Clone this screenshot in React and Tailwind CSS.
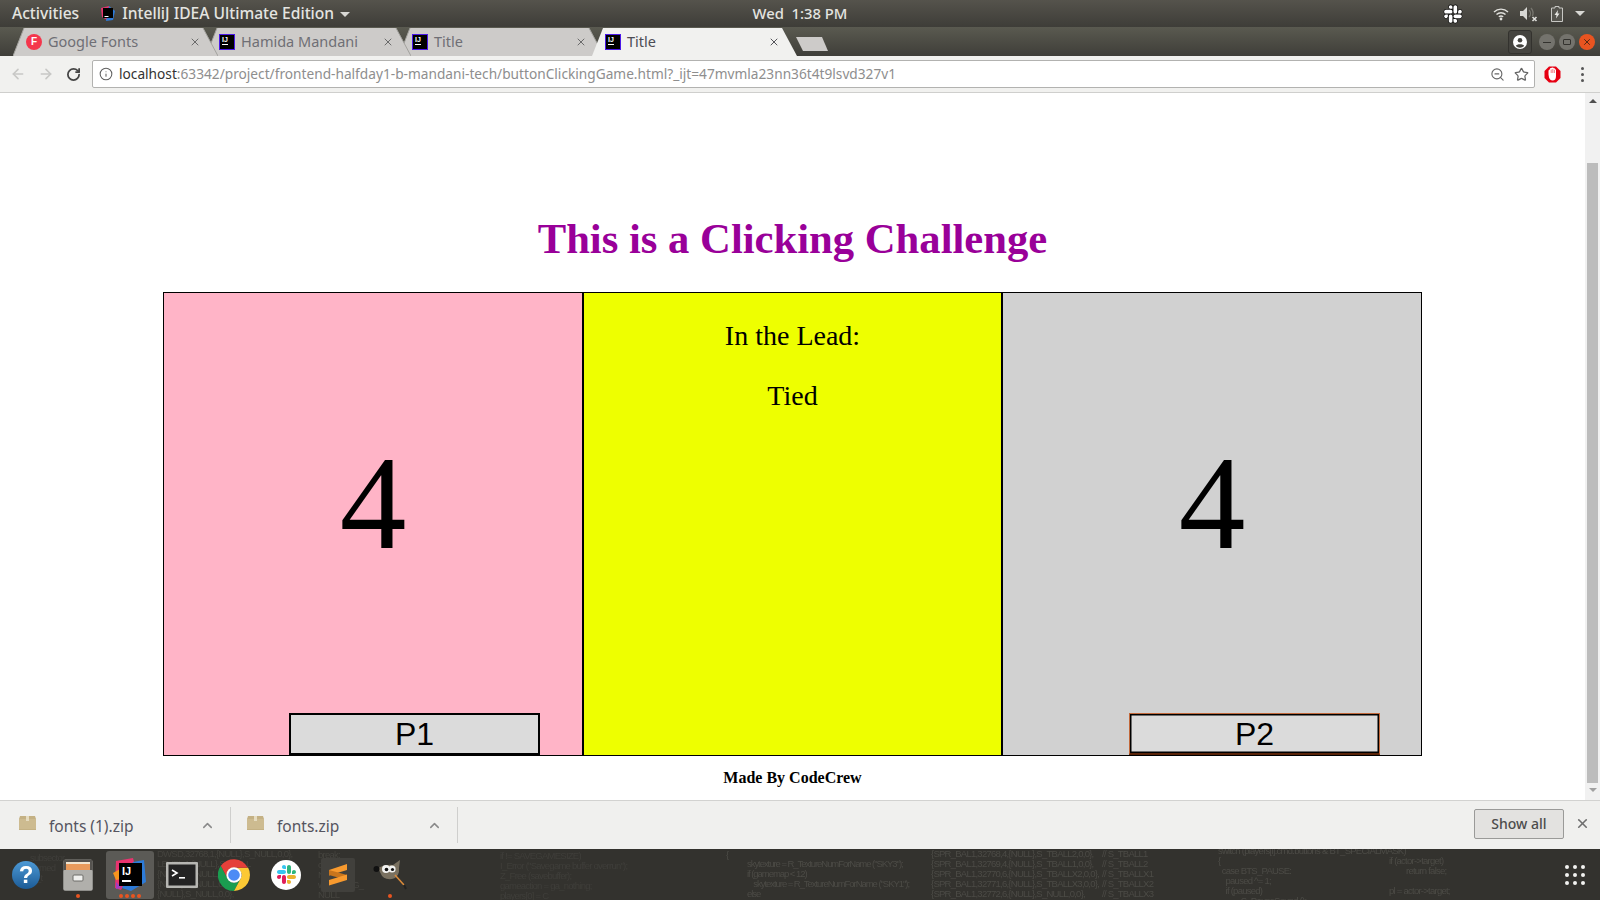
import { ArrowLeft, ArrowRight, RotateCw, Info, ZoomOut, Star, ChevronUp, X } from "lucide-react";

function IjFavicon() {
  return (
    <div className="flex h-4 w-4 shrink-0 flex-col border border-[#4a18e8] bg-black pl-[2px] text-white">
      <span className="font-['Liberation_Sans',sans-serif] text-[7px] leading-[9px] font-bold">IJ</span>
      <span className="h-px w-[6px] bg-white" />
    </div>
  );
}

function TabShape({ active }) {
  return (
    <svg className="absolute inset-0" width="205" height="29" viewBox="0 0 205 29">
      <path d="M0 29 L11 1 H190 L205 29 Z" fill={active ? "#f1f1ef" : "#cdcbc9"} />
      {!active && <path d="M0 29 L11 1 M190 1 L205 29" stroke="#a3a29e" fill="none" />}
    </svg>
  );
}

function Tab({ title, icon, active, className }) {
  return (
    <div className={`relative h-[29px] w-[205px] shrink-0 ${className}`}>
      <TabShape active={active} />
      <div className="relative flex h-full items-center pr-[15px] pl-[13px]">
        {icon}
        <span className={`ml-[6px] text-[14.5px] ${active ? "text-[#4c4c54]" : "text-[#6f6f75]"}`}>{title}</span>
        <X className={`mr-[2px] ml-auto ${active ? "text-[#55555a]" : "text-[#6a6a6a]"}`} size={12} strokeWidth={2} />
      </div>
    </div>
  );
}

function TopBar() {
  return (
    <div className="grid h-[27px] grid-cols-[1fr_auto_1fr] items-center bg-gradient-to-b from-[#55534c] to-[#3e3d38] font-medium text-[#e4e4e0]">
      <div className="flex items-center pl-3 text-[15.6px]">
        <span>Activities</span>
        <svg className="ml-[21px]" width="16" height="17" viewBox="0 0 16 17">
          <path d="M1 3 L9 1 L7 15 L2 12Z" fill="#e8336f" />
          <path d="M9 1 L15 6 L13 15 L6 16Z" fill="#2d7bd8" />
          <rect x="3" y="3" width="10" height="10" fill="#000" />
          <rect x="4.5" y="11" width="4" height="1" fill="#fff" />
        </svg>
        <span className="ml-[6px]">IntelliJ IDEA Ultimate Edition</span>
        <span className="mt-[2px] ml-[6px] h-0 w-0 border-x-[5px] border-t-[5px] border-x-transparent border-t-[#d8d8d4]" />
      </div>
      <div className="-mt-[1px] text-[14.8px]">Wed&nbsp;&nbsp;1:38 PM</div>
      <div className="flex items-center justify-end">
        <svg width="20" height="20" viewBox="-8 -8 139 139">
          <SlackPaths mono />
        </svg>
        <svg className="ml-[30px]" width="16" height="14" viewBox="0 0 16 14" fill="none" stroke="#e0e0dc" strokeWidth="1.4">
          <path d="M1 5 A10 10 0 0 1 15 5" />
          <path d="M3.5 7.5 A6.5 6.5 0 0 1 12.5 7.5" />
          <path d="M5.8 9.8 A3.5 3.5 0 0 1 10.2 9.8" />
          <circle cx="8" cy="12" r="1.4" fill="#e0e0dc" stroke="none" />
        </svg>
        <svg className="ml-[11px]" width="18" height="16" viewBox="0 0 18 16" fill="none">
          <path d="M0 5 H3 L7 1 V14 L3 10 H0Z" fill="#d8d8d4" />
          <path d="M9 4 A5 5 0 0 1 9 11 M11 2 A8 8 0 0 1 12.5 10" stroke="#77766f" strokeWidth="1.3" />
          <path d="M12.5 11 L16.5 15 M16.5 11 L12.5 15" stroke="#e0e0dc" strokeWidth="1.6" />
        </svg>
        <svg className="ml-[13px]" width="12" height="16" viewBox="0 0 12 16">
          <path d="M4 0.5 H8 V2 H11.5 V15.5 H0.5 V2 H4Z" fill="#55544e" stroke="#c8c8c4" />
          <path d="M7 4 L3.5 9 H5.5 L5 12.5 L8.5 7.5 H6.5Z" fill="#e8e8e4" />
        </svg>
        <span className="mr-[15px] ml-[12px] h-0 w-0 border-x-[5px] border-t-[5px] border-x-transparent border-t-[#d8d8d4]" />
      </div>
    </div>
  );
}

function TabBar() {
  return (
    <div className="flex h-[29px] bg-gradient-to-b from-[#5a5a50] to-[#3f3e39] pl-[13px]">
      <Tab
        className="z-30"
        title="Google Fonts"
        icon={
          <span className="flex h-4 w-4 shrink-0 items-center justify-center rounded-full bg-[#f4364c] font-['Liberation_Sans',sans-serif] text-[10px] font-bold text-white">
            F
          </span>
        }
      />
      <Tab className="z-20 -ml-[12px]" title="Hamida Mandani" icon={<IjFavicon />} />
      <Tab className="z-10 -ml-[12px]" title="Title" icon={<IjFavicon />} />
      <Tab className="z-40 -ml-[12px]" title="Title" icon={<IjFavicon />} active />
      <svg className="mt-[9px] -ml-[1px]" width="33" height="16" viewBox="0 0 33 16">
        <path d="M0 1 H26 L32 15 H7Z" fill="#cdcbc9" />
      </svg>
      <div className="ml-auto flex items-start">
        <div className="mt-[3px] flex h-6 w-6 items-center justify-center rounded-[3px] border border-[#33322e] bg-[#45443f]">
          <svg width="14" height="14" viewBox="0 0 14 14">
            <circle cx="7" cy="7" r="7" fill="#fff" />
            <circle cx="7" cy="5.3" r="2.3" fill="#45443f" />
            <path d="M2.8 11 C3.5 8.8 10.5 8.8 11.2 11 A6 6 0 0 1 2.8 11Z" fill="#45443f" />
          </svg>
        </div>
        <div className="mt-[7px] ml-[7px] flex h-4 w-4 items-center justify-center rounded-full bg-[#74736d]">
          <span className="h-px w-2 bg-[#33322e]" />
        </div>
        <div className="mt-[7px] ml-[4px] flex h-4 w-4 items-center justify-center rounded-full bg-[#74736d]">
          <span className="h-[6px] w-2 rounded-[1px] border border-[#33322e]" />
        </div>
        <div className="mt-[7px] mr-[5px] ml-[4px] flex h-4 w-4 items-center justify-center rounded-full bg-[#e95420] text-[#3a2010]">
          <X size={10} strokeWidth={2} />
        </div>
      </div>
    </div>
  );
}

function AddressBar() {
  return (
    <div className="flex h-[37px] items-center border-b border-[#cfcfcd] bg-[#f1f1ef]">
      <ArrowLeft className="ml-[10px] text-[#c8c8c6]" size={16} strokeWidth={2.4} />
      <ArrowRight className="ml-[12px] text-[#c8c8c6]" size={16} strokeWidth={2.4} />
      <RotateCw className="ml-[12px] text-[#444]" size={15} strokeWidth={2.8} />
      <div className="ml-[11px] flex h-[28px] w-[1443px] items-center rounded-[2px] border border-[#b2b2b0] bg-white">
        <Info className="ml-[6px] text-[#5f5f5f]" size={14} strokeWidth={1.8} />
        <span className="ml-[6px] whitespace-nowrap text-[13.7px] text-[#8e8e8e]">
          <span className="text-[#333]">localhost</span>:63342/project/frontend-halfday1-b-mandani-tech/buttonClickingGame.html?_ijt=47mvmla23nn36t4t9lsvd327v1
        </span>
        <ZoomOut className="mr-[9px] ml-auto text-[#666]" size={15} strokeWidth={1.8} />
        <Star className="mr-[5px] text-[#666]" size={15} strokeWidth={2} />
      </div>
      <svg className="ml-[9px]" width="17" height="17" viewBox="0 0 17 17">
        <path d="M5 0.5 H12 L16.5 5 V12 L12 16.5 H5 L0.5 12 V5Z" fill="#e60012" />
        <path d="M4.5 8.5 V5 Q4.5 3.5 5.8 3.5 V3 Q6 2 7 2 Q7.5 1.6 8.5 1.6 Q9.5 1.6 10 2.4 Q11 2.2 11.4 3.2 L12 4 V10 Q12 14.5 8.5 14.5 Q6 14.5 5 11.5Z" fill="#fff" />
        <path d="M7.2 3.5 V7 M8.8 3 V7 M10.4 3.8 V7" stroke="#e60012" strokeWidth="0.5" />
      </svg>
      <div className="ml-[20px] flex flex-col gap-[3px]">
        <span className="h-[3px] w-[3px] rounded-full bg-[#555]" />
        <span className="h-[3px] w-[3px] rounded-full bg-[#555]" />
        <span className="h-[3px] w-[3px] rounded-full bg-[#555]" />
      </div>
    </div>
  );
}

function Game() {
  return (
    <div className="flex min-w-0 flex-1 flex-col items-center font-['Liberation_Serif',serif] text-black">
      <h1 className="mt-[117px] text-[42.67px] leading-[58px] font-bold text-[#990099]">This is a Clicking Challenge</h1>
      <div className="mt-[24px] flex h-[464px] w-[1259px] border border-black">
        <div className="flex w-[420px] flex-col border-r-2 border-black bg-[#ffb4c7]">
          <div className="mt-[137px] text-center text-[133.33px] leading-[147px]">4</div>
          <button className="mt-auto ml-[125px] h-[42px] w-[251px] border-2 border-black bg-[#dbdbdb] font-['Liberation_Sans',sans-serif] text-[32px] leading-none">
            P1
          </button>
        </div>
        <div className="flex w-[419px] flex-col items-center border-r-2 border-black bg-[#eeff00] text-[28px] leading-[32px]">
          <p className="mt-[27px]">In the Lead:</p>
          <p className="mt-[28px]">Tied</p>
        </div>
        <div className="flex w-[418px] flex-col bg-[#d1d1d1]">
          <div className="mt-[137px] text-center text-[133.33px] leading-[147px]">4</div>
          <button className="mt-auto ml-[126px] h-[42px] w-[251px] border border-b-2 border-[#c2683a] border-b-[#5a2408] bg-[#dbdbdb] font-['Liberation_Sans',sans-serif] text-[32px] leading-none shadow-[inset_0_0_0_1.5px_#000]">
            P2
          </button>
        </div>
      </div>
      <p className="mt-[13px] text-[16px] leading-[18px] font-bold">Made By CodeCrew</p>
    </div>
  );
}

function Scrollbar() {
  return (
    <div className="flex w-[15px] flex-col items-center bg-[#f1f1f1]">
      <span className="mt-[6px] h-0 w-0 border-x-[4px] border-b-[4px] border-x-transparent border-b-[#505050]" />
      <div className="mt-[60px] h-[620px] w-[11px] bg-[#bcbcbc]" />
      <span className="mt-[5px] h-0 w-0 border-x-[4px] border-t-[4px] border-x-transparent border-t-[#a0a0a0]" />
    </div>
  );
}

function ZipIcon() {
  return (
    <svg className="-mt-[4px]" width="17" height="14" viewBox="0 0 17 14">
      <path d="M1 0 H16 L17 3 V14 H0 V3Z" fill="#c4b184" />
      <path d="M0 3 H17 V13 H0Z" fill="#cdbb90" />
      <rect x="7" y="0" width="3" height="5" fill="#e6dcc0" />
    </svg>
  );
}

function DownloadItem({ name, width }) {
  return (
    <div className={`flex h-[36px] items-center border-r border-[#cfcfcd] ${width}`}>
      <ZipIcon />
      <span className="mt-[3px] ml-[13px] text-[15.5px] text-[#555560]">{name}</span>
      <ChevronUp className="mr-[15px] ml-auto text-[#8a8a8a]" size={15} strokeWidth={2.4} />
    </div>
  );
}

function DownloadBar() {
  return (
    <div className="flex h-[49px] items-center border-t border-[#d2d2d0] bg-[#f0f0ee] pl-[19px]">
      <DownloadItem name="fonts (1).zip" width="w-[212px]" />
      <div className="w-[16px]" />
      <DownloadItem name="fonts.zip" width="w-[211px]" />
      <button className="mr-[11px] mb-[3px] ml-auto h-[30px] w-[90px] rounded-[2px] border border-[#9a9a98] bg-[#e3e2e0] text-[14px] font-medium text-[#4c4c4c]">
        Show all
      </button>
      <X className="mr-[10px] mb-[3px] text-[#6f6f6f]" size={15} strokeWidth={2.6} />
    </div>
  );
}

function SlackPaths({ mono }) {
  const colors = mono ? ["#fff", "#fff", "#fff", "#fff"] : ["#e01e5a", "#36c5f0", "#2eb67d", "#ecb22e"];
  const extra = mono ? { stroke: "#000", strokeWidth: 8, paintOrder: "stroke" } : {};
  return (
    <g {...extra}>
      <path fill={colors[0]} d="M25.8 77.6c0 7.1-5.8 12.9-12.9 12.9S0 84.7 0 77.6s5.8-12.9 12.9-12.9h12.9v12.9z" />
      <path fill={colors[0]} d="M32.3 77.6c0-7.1 5.8-12.9 12.9-12.9s12.9 5.8 12.9 12.9v32.3c0 7.1-5.8 12.9-12.9 12.9s-12.9-5.8-12.9-12.9V77.6z" />
      <path fill={colors[1]} d="M45.2 25.8c-7.1 0-12.9-5.8-12.9-12.9S38.1 0 45.2 0s12.9 5.8 12.9 12.9v12.9H45.2z" />
      <path fill={colors[1]} d="M45.2 32.3c7.1 0 12.9 5.8 12.9 12.9s-5.8 12.9-12.9 12.9H12.9C5.8 58.1 0 52.3 0 45.2s5.8-12.9 12.9-12.9h32.3z" />
      <path fill={colors[2]} d="M97 45.2c0-7.1 5.8-12.9 12.9-12.9s12.9 5.8 12.9 12.9-5.8 12.9-12.9 12.9H97V45.2z" />
      <path fill={colors[2]} d="M90.5 45.2c0 7.1-5.8 12.9-12.9 12.9s-12.9-5.8-12.9-12.9V12.9C64.7 5.8 70.5 0 77.6 0s12.9 5.8 12.9 12.9v32.3z" />
      <path fill={colors[3]} d="M77.6 97c7.1 0 12.9 5.8 12.9 12.9s-5.8 12.9-12.9 12.9-12.9-5.8-12.9-12.9V97h12.9z" />
      <path fill={colors[3]} d="M77.6 90.5c-7.1 0-12.9-5.8-12.9-12.9s5.8-12.9 12.9-12.9h32.3c7.1 0 12.9 5.8 12.9 12.9s-5.8 12.9-12.9 12.9H77.6z" />
    </g>
  );
}

function HelpIcon() {
  return (
    <div className="flex h-[28px] w-[28px] items-center justify-center rounded-full bg-gradient-to-b from-[#4d9ad6] to-[#1c5b96] font-['Liberation_Sans',sans-serif] text-[24px] leading-none font-bold text-white">
      ?
    </div>
  );
}

function FilesIcon() {
  return (
    <svg width="30" height="32" viewBox="0 0 30 32">
      <rect x="0.5" y="0.5" width="29" height="31" rx="2" fill="#a8a7a3" />
      <rect x="0.5" y="0.5" width="29" height="12" rx="2" fill="#55534f" />
      <rect x="3" y="3" width="24" height="5" fill="#f0e4d0" />
      <rect x="3" y="5" width="24" height="6" fill="#e89a5c" />
      <rect x="0.5" y="11" width="29" height="20.5" rx="1" fill="#b0afab" />
      <rect x="10" y="16" width="10" height="6" rx="1" fill="#efefed" stroke="#6d6c68" />
    </svg>
  );
}

function IdeaIcon() {
  return (
    <svg width="34" height="34" viewBox="0 0 34 34">
      <path d="M3 3 L20 0 L22 8 L8 32 L2 30Z" fill="#e8336f" />
      <path d="M0 15 L7 11 L8 21 L3 22Z" fill="#f7941e" />
      <path d="M20 4 L31 2 L33 24 L18 33 L9 30Z" fill="#2d7bd8" />
      <path d="M3 24 L9 30 L3 31Z" fill="#a03dc0" />
      <rect x="6" y="5" width="23" height="23" fill="#000" />
      <text x="9" y="17" fill="#fff" fontSize="11" fontWeight="700" fontFamily="Liberation Sans">IJ</text>
      <rect x="9" y="22" width="9" height="2" fill="#fff" />
    </svg>
  );
}

function TerminalIcon() {
  return (
    <svg width="32" height="26" viewBox="0 0 32 26">
      <rect width="32" height="26" rx="1" fill="#b6b6b2" />
      <rect x="2.5" y="2.5" width="27" height="21" fill="#232323" />
      <path d="M6 8 L11 11 L6 14" fill="none" stroke="#fff" strokeWidth="1.6" />
      <rect x="13" y="15" width="6" height="1.6" fill="#fff" />
    </svg>
  );
}

function ChromeIcon() {
  return (
    <svg width="32" height="32" viewBox="2 2 44 44">
      <path d="M5.9 11.4 A22 22 0 0 0 24 46 L33 29 A10 10 0 0 1 15.3 29Z" fill="#1a9d50" />
      <path d="M43 13 A22 22 0 0 1 24 46 L33 29 A10 10 0 0 0 24 14 H43Z" fill="#fcc934" />
      <path d="M24 14 H43 A22 22 0 0 0 5.9 11.4 L15.3 29 A10 10 0 0 1 24 14Z" fill="#e5403a" />
      <circle cx="24" cy="24" r="10.5" fill="#fff" />
      <circle cx="24" cy="24" r="8" fill="#4c8bf5" />
    </svg>
  );
}

function SlackIcon() {
  return (
    <div className="flex h-[30px] w-[30px] items-center justify-center rounded-full bg-white">
      <svg width="19" height="19" viewBox="0 0 123 123">
        <SlackPaths />
      </svg>
    </div>
  );
}

function SublimeIcon() {
  return (
    <div className="flex h-[34px] w-[34px] items-center justify-center rounded-[2px] bg-[#41403c]">
      <svg width="18" height="22" viewBox="0 0 18 22">
        <path d="M18 0 V6 L0 11.5 V6Z" fill="#f89a2e" />
        <path d="M0 6 L18 11 V16 L0 11Z" fill="#c9751c" />
        <path d="M18 10.5 V16 L0 21.5 V16Z" fill="#f89a2e" />
      </svg>
    </div>
  );
}

function GimpIcon() {
  return (
    <svg width="34" height="30" viewBox="0 0 34 30">
      <path d="M5 8 Q12 4 20 5 L27 0 L26 8 Q27 17 19 19 Q10 20 8 14Z" fill="#7a7160" />
      <circle cx="3.5" cy="9" r="3" fill="#111" />
      <circle cx="13" cy="9" r="4" fill="#f2f2f0" />
      <circle cx="19" cy="9" r="3.6" fill="#f2f2f0" />
      <circle cx="13.5" cy="9.5" r="1.8" fill="#111" />
      <circle cx="19.5" cy="9.5" r="1.6" fill="#111" />
      <path d="M22 15 L31 25" stroke="#d98a3a" strokeWidth="1.6" />
      <path d="M31 25 L33 29" stroke="#222" strokeWidth="2" />
    </svg>
  );
}

function Dots({ count }) {
  return (
    <div className="absolute bottom-[1px] left-0 flex w-full justify-center gap-[2px]">
      {Array.from({ length: count }).map((_, i) => (
        <span key={i} className="h-[4px] w-[4px] rounded-full bg-[#e95420]" />
      ))}
    </div>
  );
}

function DockItem({ children, dots, active }) {
  return (
    <div className={`relative flex h-[48px] w-[48px] items-center justify-center rounded-[3px] ${active ? "bg-[#5b5a56]" : ""}`}>
      {children}
      {dots > 0 && <Dots count={dots} />}
    </div>
  );
}

const wallpaper = [
  { pos: "left-[30px] top-[4px] text-[#3f3e3a]", lines: ["subsector", "gamed", "pl_t"] },
  { pos: "left-[157px] top-[0px] text-[#45443f]", lines: ["DWSD,32768,1,{NULL},S_NULL,0,0},", "LEVEL,1,{NULL},S_NULL", "{NULL},S_NULL,0,0},", "{NULL},S_NULL,0,0},", "{NULL},S_NULL,0,0},"] },
  { pos: "left-[318px] top-[1px] text-[#45443f]", lines: ["break;", "case 3:", "NULL", "wminfo = G_", "NULL", "", "case 4:"] },
  { pos: "left-[500px] top-[2px] text-[#3f3e3a]", lines: ["if != SAVEGAMESIZE)", "I_Error (\"Savegame buffer overrun\");", "Z_Free (savebuffer);", "gameaction = ga_nothing;", "players[0] = C"] },
  { pos: "left-[726px] top-[1px]", lines: ["{"] },
  { pos: "left-[747px] top-[10px] tracking-[-1.05px]", lines: ["skytexture = R_TextureNumForName (\"SKY3\");", "if (gamemap < 12)", "    skytexture = R_TextureNumForName (\"SKY1\");", "else"] },
  { pos: "left-[931px] top-[0px]", lines: ["{SPR_BAL1,32768,4,{NULL},S_TBALL2,0,0},", "{SPR_BAL1,32769,4,{NULL},S_TBALL1,0,0},", "{SPR_BAL1,32770,6,{NULL},S_TBALLX2,0,0},", "{SPR_BAL1,32771,6,{NULL},S_TBALLX3,0,0},", "{SPR_BAL1,32772,6,{NULL},S_NULL,0,0},"] },
  { pos: "left-[1102px] top-[0px]", lines: ["// S_TBALL1", "// S_TBALL2", "// S_TBALLX1", "// S_TBALLX2", "// S_TBALLX3"] },
  { pos: "left-[1218px] top-[-3px]", lines: ["switch (players[i].cmd.buttons & BT_SPECIALMASK)", "{", "  case BTS_PAUSE:", "    paused ^= 1;", "    if (paused)", "            S_PauseSound ();"] },
  { pos: "left-[1389px] top-[7px]", lines: ["if (actor->target)", "         return false;", "", "pl = actor->target;"] },
];

function Dock() {
  return (
    <div className="relative flex h-[51px] items-center overflow-hidden bg-[#33322e] pl-[2px]">
      <div className="absolute inset-0 font-['Liberation_Sans',sans-serif] text-[9.5px] leading-[10px] tracking-[-0.75px] whitespace-pre text-[#4c4b46] blur-[0.3px]">
        {wallpaper.map((block) => (
          <div key={block.pos} className={`absolute ${block.pos}`}>
            {block.lines.map((line, i) => (
              <div key={i} className="h-[10px]">{line}</div>
            ))}
          </div>
        ))}
      </div>
      <div className="relative flex gap-[4px]">
        <DockItem><HelpIcon /></DockItem>
        <DockItem dots={1}><FilesIcon /></DockItem>
        <DockItem dots={4} active><IdeaIcon /></DockItem>
        <DockItem><TerminalIcon /></DockItem>
        <DockItem><ChromeIcon /></DockItem>
        <DockItem><SlackIcon /></DockItem>
        <DockItem><SublimeIcon /></DockItem>
        <DockItem dots={1}><GimpIcon /></DockItem>
      </div>
      <div className="relative mr-[15px] ml-auto grid grid-cols-3 gap-x-[4px] gap-y-[4px]">
        {Array.from({ length: 9 }).map((_, i) => (
          <span key={i} className="h-[4px] w-[4px] rounded-full bg-[#f2f2f0]" />
        ))}
      </div>
    </div>
  );
}

export default function App() {
  return (
    <div className="flex h-[900px] w-[1600px] flex-col overflow-hidden bg-white font-['Noto_Sans',sans-serif]">
      <TopBar />
      <TabBar />
      <AddressBar />
      <div className="flex min-h-0 flex-1">
        <Game />
        <Scrollbar />
      </div>
      <DownloadBar />
      <Dock />
    </div>
  );
}
